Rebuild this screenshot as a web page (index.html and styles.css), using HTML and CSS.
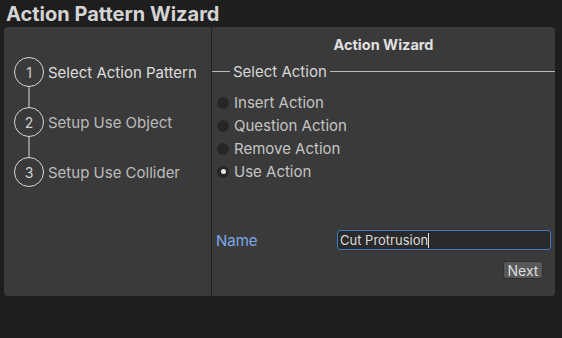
FILE: index.html
```html
<!DOCTYPE html>
<html lang="en">
<head>
    <meta charset="UTF-8">
    <meta name="viewport" content="width=device-width, initial-scale=1.0">
    <title>Action Pattern Wizard</title>
    <link rel="stylesheet" href="styles.css">
</head>
<body>

<h1 class="title">Action Pattern Wizard</h1>

<div class="window">
    <div class="steps">
        <div class="step active">
            <span class="step-num">1</span>
            <span class="step-label">Select Action Pattern</span>
        </div>
        <div class="step-link"></div>
        <div class="step">
            <span class="step-num">2</span>
            <span class="step-label">Setup Use Object</span>
        </div>
        <div class="step-link"></div>
        <div class="step">
            <span class="step-num">3</span>
            <span class="step-label">Setup Use Collider</span>
        </div>
    </div>

    <div class="content">
        <h2 class="content-title">Action Wizard</h2>

        <div class="group-head">
            <span class="group-line short"></span>
            <span class="group-label">Select Action</span>
            <span class="group-line"></span>
        </div>

        <div class="radio-list">
            <label class="radio"><span class="radio-dot"></span>Insert Action</label>
            <label class="radio"><span class="radio-dot"></span>Question Action</label>
            <label class="radio"><span class="radio-dot"></span>Remove Action</label>
            <label class="radio checked"><span class="radio-dot"></span>Use Action</label>
        </div>

        <div class="field">
            <label class="field-label" for="action-name">Name</label>
            <div class="field-input"><span>Cut Protrusion</span><span class="caret"></span></div>
        </div>

        <div class="actions">
            <button class="btn">Next</button>
        </div>
    </div>
</div>

</body>
</html>
```

FILE: styles.css
```css
body {
    margin: 0;
    background: #1e1e1e;
    font-family: Inter, "Noto Sans", sans-serif;
    color: #d2d2d2;
}
.title {
    margin: 0;
    padding-left: 6px;
    height: 27px;
    line-height: 29px;
    font-size: 20px;
    font-weight: 700;
    color: #d4d4d4;
    overflow: hidden;
}
.window {
    display: flex;
    height: 269px;
    margin: 0 7px 0 4px;
    background: #3a3a3a;
    border-radius: 4px;
}
.steps {
    width: 208px;
    padding: 30px 0 0 10px;
    box-sizing: border-box;
    border-right: 1px solid #222;
}
.step {
    display: flex;
    align-items: center;
}
.step-num {
    width: 30px;
    height: 30px;
    box-sizing: border-box;
    border: 1.5px solid #d6d6d6;
    border-radius: 50%;
    display: flex;
    align-items: center;
    justify-content: center;
    font-size: 14px;
    color: #d0d0d0;
}
.step-label {
    margin-left: 4px;
    font-size: 15px;
    color: #bcbcbc;
}
.step.active .step-label {
    color: #dedede;
}
.step-link {
    width: 2px;
    height: 20px;
    margin-left: 14px;
    background: #8a8a8a;
}
.content {
    flex: 1;
}
.content-title {
    margin: 9px 0 0;
    line-height: 18px;
    text-align: center;
    font-size: 14.5px;
    font-weight: 700;
    color: #e0e0e0;
}
.group-head {
    display: flex;
    align-items: center;
    margin-top: 8px;
    height: 18px;
}
.group-line {
    flex: 1;
    height: 1px;
    background: #b8b8b8;
}
.group-line.short {
    flex: 0 0 18px;
}
.group-label {
    padding: 0 3px;
    font-size: 15px;
    color: #d6d6d6;
}
.radio-list {
    margin-top: 11px;
    padding-left: 5px;
}
.radio {
    display: flex;
    align-items: center;
    height: 23px;
    font-size: 15px;
    color: #c4c4c4;
}
.radio-dot {
    width: 12px;
    height: 12px;
    margin-right: 5px;
    border-radius: 50%;
    background: #262626;
    display: flex;
    align-items: center;
    justify-content: center;
}
.radio.checked .radio-dot::after {
    content: "";
    width: 5px;
    height: 5px;
    border-radius: 50%;
    background: #e6e6e6;
}
.field {
    display: flex;
    align-items: center;
    margin-top: 47px;
    padding-left: 4px;
}
.field-label {
    flex: 1;
    font-size: 15px;
    color: #7ca9e8;
}
.field-input {
    width: 214px;
    height: 20px;
    margin-right: 4px;
    box-sizing: border-box;
    border: 1px solid #3a79c8;
    border-radius: 3px;
    background: #2a2a2a;
    padding-left: 2px;
    display: flex;
    align-items: center;
    font-size: 13px;
    color: #dadada;
}
.caret {
    width: 1px;
    height: 15px;
    background: #e0e0e0;
}
.actions {
    display: flex;
    justify-content: flex-end;
    margin: 11px 12px 0 0;
}
.btn {
    width: 40px;
    height: 18px;
    padding: 0;
    border: 1px solid #303030;
    border-radius: 3px;
    background: #585858;
    color: #dcdcdc;
    font-family: inherit;
    font-size: 14px;
}
```
